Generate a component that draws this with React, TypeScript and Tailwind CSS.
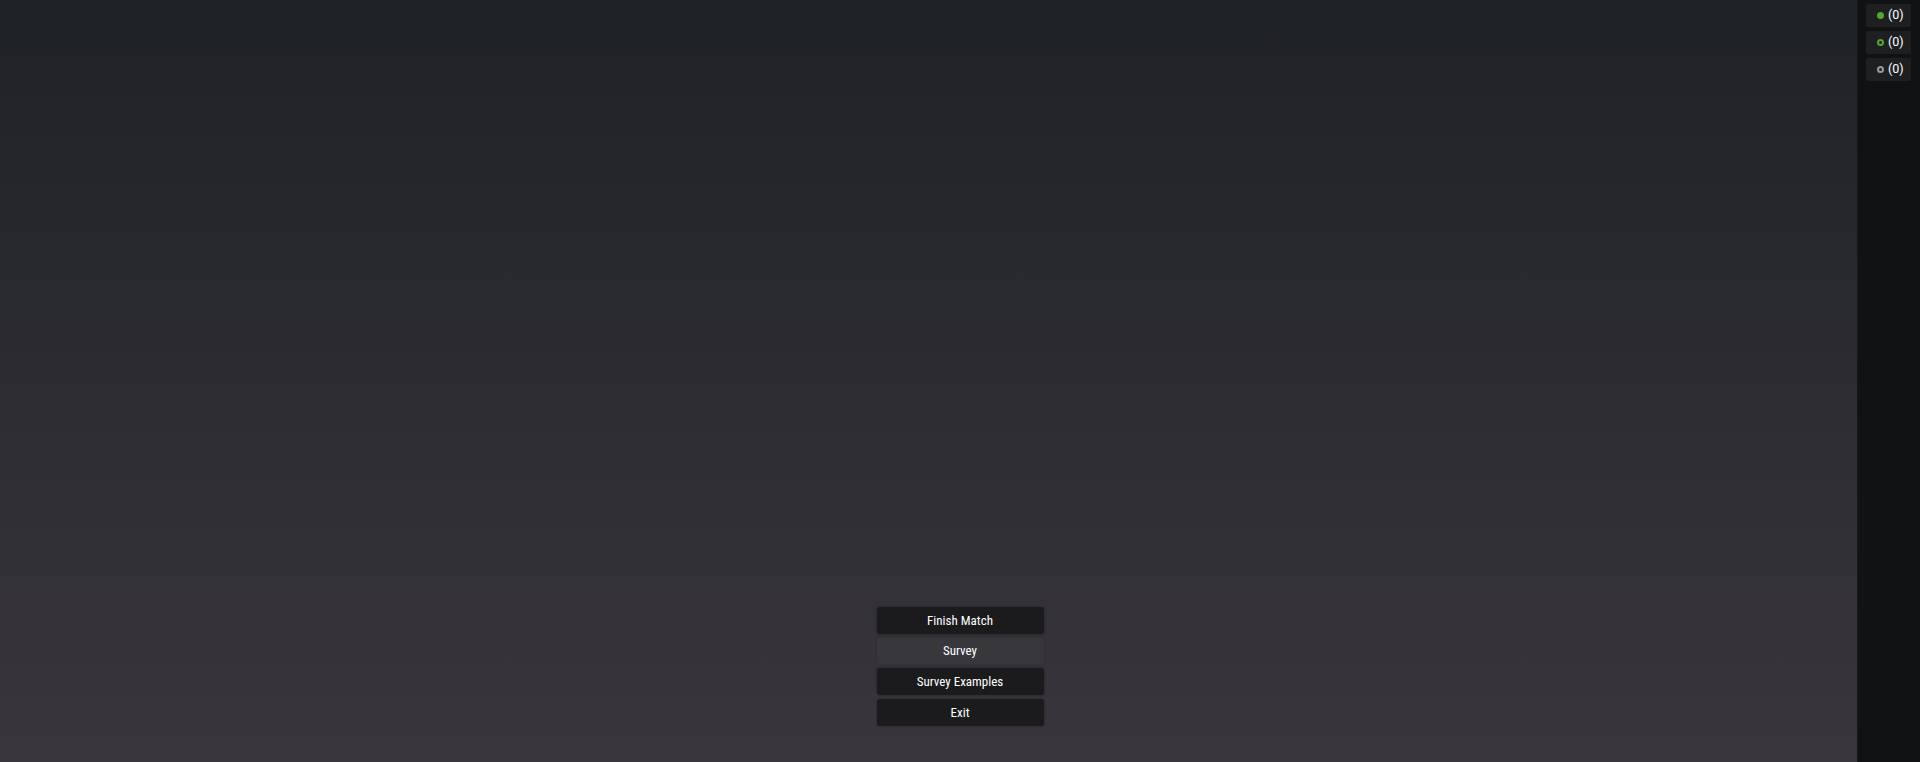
export default function App() {
  const counters = [
    { kind: "filled", color: "bg-[#55a630]" },
    { kind: "ring-green", color: "border-[#55a630]" },
    { kind: "ring-gray", color: "border-[#9a98a3]" },
  ];

  return (
    <div className="relative h-[762px] w-full font-['Roboto',sans-serif] text-white">
      {/* main area */}
      <div className="flex h-full w-full flex-col items-center justify-end bg-gradient-to-b from-[#1f2225] to-[#39363d] pb-[36px]">
        <div className="flex w-[167px] flex-col gap-[4px] font-['Roboto_Condensed','Roboto',sans-serif]">
          <button className="h-[27px] rounded-[3px] bg-[#1b1b1d] text-[13px] shadow-[0_0_3px_rgba(0,0,0,0.35)]">
            Finish Match
          </button>
          <button className="h-[26px] rounded-[3px] bg-[#38373c] text-[13px] shadow-[0_0_2px_rgba(0,0,0,0.2)]">
            Survey
          </button>
          <button className="h-[27px] rounded-[3px] bg-[#1b1b1d] text-[13px] shadow-[0_0_3px_rgba(0,0,0,0.35)]">
            Survey Examples
          </button>
          <button className="h-[27px] rounded-[3px] bg-[#1b1b1d] text-[13px] shadow-[0_0_3px_rgba(0,0,0,0.35)]">
            Exit
          </button>
        </div>
      </div>

      {/* right sidebar, laid over the main area */}
      <div className="absolute inset-y-0 right-0 flex w-[63px] flex-col items-start gap-[4px] border-l border-[#17181a] bg-[#111213] pl-[8px] pt-[4px]">
        {counters.map((c, i) => (
          <div
            key={i}
            className="flex h-[23px] w-[45px] items-center gap-[4px] rounded-[2px] bg-[#1e1f21] pl-[11px] text-[12.5px]"
          >
            {c.kind === "filled" ? (
              <span className={`h-[7px] w-[7px] rounded-full ${c.color}`} />
            ) : (
              <span className={`h-[7px] w-[7px] rounded-full border-2 ${c.color}`} />
            )}
            <span>(0)</span>
          </div>
        ))}
      </div>
    </div>
  );
}
